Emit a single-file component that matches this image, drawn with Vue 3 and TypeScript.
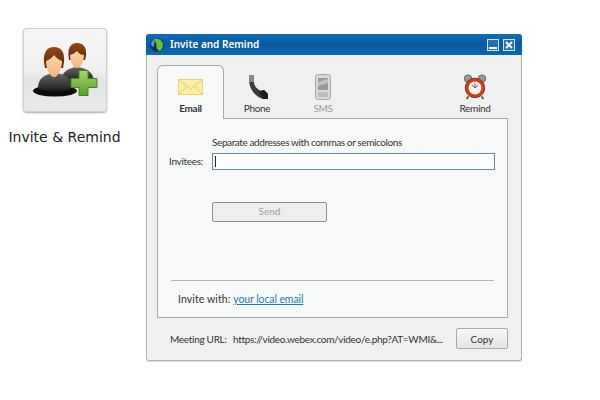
<script setup lang="ts">
const tabs = [
  { id: 'email', label: 'Email' },
  { id: 'phone', label: 'Phone' },
  { id: 'sms', label: 'SMS' },
]
</script>

<template>
  <div class="page">
    <div class="feature">
      <div class="tile">
        <svg width="84" height="84" viewBox="22 28 84 84">
          <defs>
            <linearGradient id="skin" x1="0" y1="0" x2="0" y2="1">
              <stop offset="0" stop-color="#fcd6ae" />
              <stop offset="1" stop-color="#f6b27c" />
            </linearGradient>
            <linearGradient id="hair" x1="0" y1="0" x2="0" y2="1">
              <stop offset="0" stop-color="#94481a" />
              <stop offset="1" stop-color="#5a2808" />
            </linearGradient>
            <linearGradient id="torso" x1="0" y1="0" x2="0" y2="1">
              <stop offset="0" stop-color="#666" />
              <stop offset="1" stop-color="#1c1c1c" />
            </linearGradient>
            <linearGradient id="plus" x1="0" y1="0" x2="0" y2="1">
              <stop offset="0" stop-color="#a6d668" />
              <stop offset="1" stop-color="#56a02a" />
            </linearGradient>
          </defs>
          <path d="M60 82c0-9 6-14 16-15 10 1 17 6 17 15z" fill="url(#torso)" />
          <path d="M67.500 56c-1-9 3-13 8.500-13 6 0 10 4 9 13l-1 4H68z" fill="url(#hair)" />
          <path d="M69 55c3-1 5-2 7-4 2 3 5 4 7 4 0 6-3 13-7 13s-7-7-7-13z" fill="url(#skin)" />
          <ellipse cx="54" cy="91" rx="22" ry="5.500" fill="#0c0c0c" />
          <path d="M37 88c0-9 6-14 17-15 11 1 17 6 17 15-4 4-30 4-34 0z" fill="url(#torso)" />
          <path d="M43 62c-1-11 4-15 10-15 7 0 11 5 10 15l-1 6H44z" fill="url(#hair)" />
          <path d="M45 61c3-1 6-3 8-6 2 3 5 5 8 6 0 8-4 16-8 16s-8-8-8-16z" fill="url(#skin)" />
          <path
            d="M78 70.500h9v8h9v9h-9v8h-9v-8h-8v-9h8z"
            fill="url(#plus)"
            stroke="#3f8a20"
          />
        </svg>
      </div>
      <div class="feature-name">Invite &amp; Remind</div>
    </div>

    <div class="window">
      <div class="titlebar">
        <svg class="globe" width="14" height="14" viewBox="0 0 14 14">
          <circle cx="7" cy="7" r="6.800" fill="#0b2f5e" />
          <path d="M4 1.200c4-1.200 8 1 8.800 4.300.6 3.500-1 6.500-3.300 7.500C7 12 6 9 6.500 7 6.800 5 4.500 3.500 4 1.200z" fill="#6cc030" />
          <path d="M1 6c.5-2 1.500-3.500 3-4.500 1 2 .5 5-.5 7.500C2 8.500 1.200 7.500 1 6z" fill="#3f9fe0" />
        </svg>
        <span class="title">Invite and Remind</span>
        <span class="winbtn"><i class="min-mark"></i></span>
        <span class="winbtn">
          <svg width="10" height="10" viewBox="0 0 10 10">
            <path d="M2 2l6 6M8 2l-6 6" stroke="#fff" stroke-width="1.800" />
          </svg>
        </span>
      </div>

      <div class="content">
        <div class="tabs">
          <div
            v-for="(tab, i) in tabs"
            :key="tab.id"
            class="tab"
            :class="{ active: i === 0, disabled: tab.id === 'sms' }"
          >
            <svg v-if="tab.id === 'email'" width="26" height="26" viewBox="0 0 26 26">
              <rect x="0.500" y="5.500" width="24" height="15" fill="#fdeea0" stroke="#ecd27a" />
              <path d="M.5 5.500L12.500 15 24.500 5.500M.5 20.500l8.500-8.500M24.500 20.500l-8.500-8.500" fill="none" stroke="#e8cc74" />
            </svg>
            <svg v-else-if="tab.id === 'phone'" width="26" height="26" viewBox="0 0 26 26">
              <path d="M5 1h5v7c0 4 3 7 7 9l3-1 4 4v5h-5C11 23 5 14 5 6z" fill="#3a3a3a" />
              <path d="M5 1h5v7H5z" fill="#8a8a8a" />
              <path d="M15 17l5-1 4 4v5h-5z" fill="#1c1c1c" />
            </svg>
            <svg v-else width="26" height="26" viewBox="0 0 26 26">
              <rect x="5.500" y="0.500" width="15" height="25" rx="2" fill="#d8d8d8" stroke="#a8a8a8" />
              <rect x="8" y="4" width="10" height="12" fill="#9a9a9a" />
              <path d="M8 8l10-3v4L8 12z" fill="#c4c4c4" />
              <rect x="8" y="18" width="10" height="5" fill="#bdbdbd" />
            </svg>
            <span>{{ tab.label }}</span>
          </div>
          <div class="tab remind">
            <svg width="28" height="28" viewBox="0 0 28 28">
              <circle cx="6.500" cy="5" r="4" fill="#9a9a9a" stroke="#5a5a5a" />
              <circle cx="21.500" cy="5" r="4" fill="#9a9a9a" stroke="#5a5a5a" />
              <path d="M7 24l-2 3M21 24l2 3" stroke="#6a5a3a" stroke-width="2" />
              <circle cx="14" cy="15" r="10.500" fill="#c8401e" stroke="#8a2a10" />
              <circle cx="14" cy="15" r="7" fill="#f6f2e8" />
              <path d="M14 15V10M14 15l3.500-3M14 15l-3-3" stroke="#555" fill="none" />
            </svg>
            <span>Remind</span>
          </div>
        </div>

        <div class="panel">
          <div class="form">
            <span></span>
            <span class="hint">Separate addresses with commas or semicolons</span>
            <label class="field-label">Invitees:</label>
            <div class="input"><i class="caret"></i></div>
            <span></span>
            <button class="send" disabled>Send</button>
          </div>
          <div class="invite-with">
            Invite with: <a class="link">your local email</a>
          </div>
        </div>

        <div class="footer">
          <span class="url-label">Meeting URL:</span>
          <span class="url">https://video.webex.com/video/e.php?AT=WMI&amp;...</span>
          <button class="copy">Copy</button>
        </div>
      </div>
    </div>
  </div>
</template>

<style>
html,
body {
  background: #fff;
}
</style>

<style scoped>
.page {
  display: flex;
  align-items: flex-start;
  width: 600px;
  height: 400px;
  padding-top: 28px;
  box-sizing: border-box;
  font-family: Lato, "Liberation Sans", sans-serif;
  font-size: 10px;
  letter-spacing: -0.3px;
  color: #333;
  overflow: hidden;
}

.feature {
  width: 129px;
  flex: none;
  display: flex;
  flex-direction: column;
  align-items: center;
}

.tile {
  width: 84px;
  height: 84px;
  border-radius: 4px;
  background: linear-gradient(#f6f6f6, #efefef 50%, #e4e4e4 62%, #e9e9e9);
  box-shadow: 0 0 0 1px #d0d0d0 inset, 0 1px 2px #aaa;
}

.tile svg {
  display: block;
}

.feature-name {
  margin-top: 17px;
  font-family: "DejaVu Sans", sans-serif;
  font-size: 14px;
  line-height: 17px;
  letter-spacing: 0;
  color: #222;
  white-space: nowrap;
}

.window {
  width: 376px;
  height: 327px;
  margin: 6px 0 0 17px;
  box-sizing: border-box;
  border: 1px solid #b4b4b4;
  border-top: none;
  border-radius: 3px;
  background: #f0f0f0;
  box-shadow: 0 1px 1px #ddd;
  flex: none;
}

.titlebar {
  height: 21px;
  margin: 0 -1px;
  padding: 0 7px 0 4px;
  display: flex;
  align-items: center;
  gap: 4px;
  border-radius: 3px 3px 0 0;
  background: linear-gradient(#0f6db4, #0b5aa0 50%, #0c69b0);
}

.globe {
  flex: none;
}

.title {
  flex: 1;
  margin-left: 2px;
  padding-bottom: 1px;
  color: #fff;
  font-family: "Noto Sans", sans-serif;
  font-size: 10px;
  font-weight: 600;
  letter-spacing: 0;
}

.winbtn {
  width: 12px;
  height: 12px;
  box-sizing: border-box;
  border: 1px solid #cfe2f2;
  display: flex;
  align-items: center;
  justify-content: center;
  background: rgba(255, 255, 255, 0.12);
}

.min-mark {
  width: 8px;
  height: 2px;
  margin-top: 6px;
  background: #fff;
}

.content {
  padding: 10px 13px 0 10px;
}

.tabs {
  display: flex;
  height: 54px;
  margin-bottom: -1px;
  position: relative;
}

.tab {
  width: 66px;
  height: 53px;
  box-sizing: border-box;
  padding-top: 9px;
  display: flex;
  flex-direction: column;
  align-items: center;
  font-size: 10px;
  line-height: 13px;
  color: #333;
}

.tab svg {
  display: block;
  height: 26px;
  margin-bottom: 2px;
}

.tab.active {
  width: 67px;
  height: 54px;
  border: 1px solid #a8a8a8;
  border-bottom: none;
  border-radius: 6px 6px 0 0;
  background: #f7faf8;
  font-weight: 700;
  padding-top: 8px;
  position: relative;
  z-index: 1;
}

.tab.disabled {
  color: #9a9a9a;
}

.remind {
  margin-left: auto;
}

.panel {
  height: 200px;
  box-sizing: border-box;
  border: 1px solid #a8a8a8;
  background: #f7faf8;
  padding: 16px 13px 0 13px;
  display: flex;
  flex-direction: column;
}

.form {
  flex: 1;
  display: grid;
  grid-template-columns: 37px 283px;
  column-gap: 6px;
  grid-template-rows: 18px 17px auto;
  row-gap: 0;
  align-items: center;
  justify-content: start;
  margin-left: -2px;
}

.hint {
  align-self: start;
  line-height: 14px;
  letter-spacing: -0.4px;
  white-space: nowrap;
}

.field-label {
  margin-top: -2px;
  text-align: left;
  white-space: nowrap;
}

.input {
  height: 17px;
  box-sizing: border-box;
  border: 1px solid #5d8fae;
  background: #fff;
  display: flex;
  align-items: center;
  padding-left: 2px;
}

.caret {
  width: 1px;
  height: 11px;
  background: #222;
}

.send {
  grid-column: 2;
  align-self: start;
  margin-top: 32px;
  width: 115px;
  height: 20px;
  padding: 0 0 2px;
  border: 1px solid #8e8e8e;
  border-radius: 2px;
  background: #eee;
  color: #9c9c9c;
  font: inherit;
}

.invite-with {
  height: 37px;
  box-sizing: border-box;
  border-top: 1px solid #b4b4b4;
  padding: 11px 0 0 7px;
  line-height: 14px;
  font-size: 10.500px;
  letter-spacing: 0.1px;
}

.link {
  color: #1a7db5;
  text-decoration: underline;
  letter-spacing: -0.1px;
}

.footer {
  display: flex;
  align-items: center;
  height: 41px;
  padding-left: 13px;
}

.url-label {
  width: 63px;
  flex: none;
}

.url {
  flex: 1;
  min-width: 0;
  white-space: nowrap;
}

.copy {
  width: 52px;
  height: 21px;
  flex: none;
  padding: 0;
  border: 1px solid #a8a8a8;
  border-radius: 2px;
  background: linear-gradient(#f8f8f8, #e4e4e4);
  color: #333;
  font: inherit;
}
</style>
